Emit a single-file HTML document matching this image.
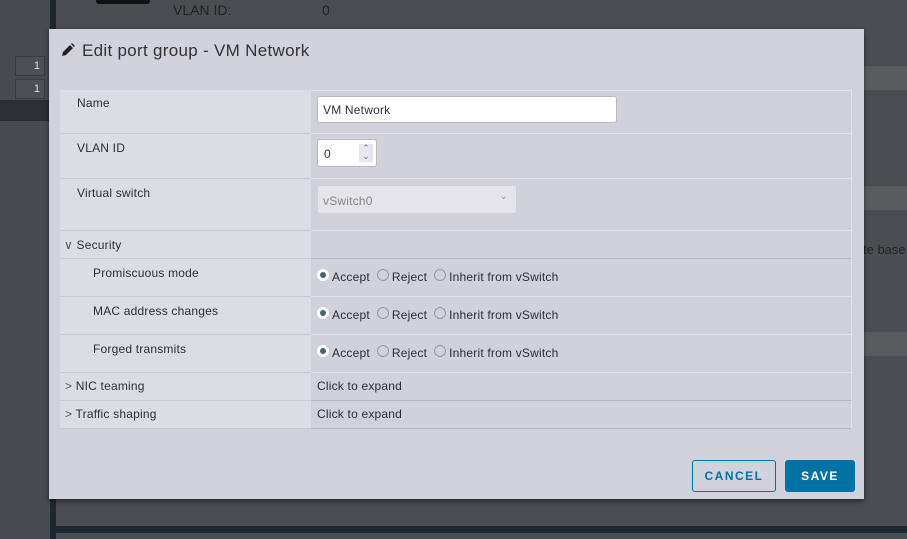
<!DOCTYPE html><html><head><style>
*{margin:0;padding:0;box-sizing:border-box}
body{width:907px;height:539px;overflow:hidden;background:#4c4d52;font-family:"Liberation Sans",sans-serif;position:relative;color:#333}
.a{position:absolute}
.t{font-size:12px;color:#2d2d33;letter-spacing:.2px}
.lab{position:absolute;left:60px;width:251px;background:#dcdce4;border-bottom:1px solid #cacad2}
.val{position:absolute;left:311px;width:541px;background:#d1d1db;border-bottom:1px solid #e2e2ea;border-right:1px solid #e2e2ea}
.r{position:absolute;top:10px;font-size:12px;color:#2d2d33;letter-spacing:.2px;white-space:nowrap}
.rad{display:inline-block;width:12px;height:12px;border-radius:50%;border:1px solid #9a9aa2;background:#d1d1db;vertical-align:0;margin-right:3px}
.on{background:#45607a;border:3px solid #fff}
.g{margin-left:7px}
</style></head><body>
<div class="a" style="left:0;top:0;width:50px;height:539px;background:#4a4b50"></div>
<div class="a" style="left:0;top:100px;width:56px;height:21px;background:#2a2f36"></div>
<div class="a" style="left:15px;top:56px;width:30px;height:20px;border:1px solid #3a3b40;background:#4e4f54;color:#ddd;font-size:11px;text-align:right;padding:3px 4px">1</div>
<div class="a" style="left:15px;top:79px;width:30px;height:20px;border:1px solid #3a3b40;background:#4e4f54;color:#ddd;font-size:11px;text-align:right;padding:3px 4px">1</div>
<div class="a" style="left:50px;top:0;width:6px;height:539px;background:#1e2831"></div>
<div class="a" style="left:50px;top:526px;width:857px;height:7px;background:#1e2831"></div>
<div class="a" style="left:96px;top:0;width:54px;height:4px;background:#111;border-radius:0 0 3px 3px"></div>
<div class="a" style="left:173px;top:2px;color:#222;font-size:14px">VLAN ID:</div>
<div class="a" style="left:322px;top:2px;color:#222;font-size:14px">0</div>
<div class="a" style="left:863px;top:66px;width:44px;height:24px;background:#5a5b5f"></div>
<div class="a" style="left:863px;top:186px;width:44px;height:24px;background:#5a5b5f"></div>
<div class="a" style="left:863px;top:332px;width:44px;height:24px;background:#5a5b5f"></div>
<div class="a" style="left:863px;top:242px;color:#222;font-size:13px">te base</div>

<div class="a" style="left:49px;top:29px;width:815px;height:470px;background:#d2d2dc;box-shadow:0 2px 5px rgba(0,0,0,.5)">
<svg class="a" style="left:12px;top:14px" width="14" height="14" viewBox="0 0 14 14"><path d="M1 13 L2 9 L9 2 L12 5 L5 12 Z" fill="#222"/><path d="M10 1 L11 0 L14 3 L13 4 Z" fill="#222"/></svg>
<div class="a" style="left:33px;top:12px;font-size:17px;color:#333;letter-spacing:.3px">Edit port group - VM Network</div>
</div>

<div class="lab" style="top:90px;height:44px"><span class="a t" style="left:17px;top:6px">Name</span></div>
<div class="val" style="top:90px;height:44px;border-top:1px solid #e2e2ea"><div class="a" style="left:6px;top:5px;width:300px;height:27px;background:#fff;border:1px solid #bbb;border-radius:3px;font-size:12px;padding:6px 5px;letter-spacing:.2px">VM Network</div></div>
<div class="lab" style="top:134px;height:45px"><span class="a t" style="left:17px;top:7px">VLAN ID</span></div>
<div class="val" style="top:134px;height:45px"><div class="a" style="left:6px;top:5px;width:60px;height:28px;background:#fff;border:1px solid #bbb;border-radius:3px;font-size:12px;padding:7px 6px">0<div class="a" style="left:41px;top:4px;width:14px;height:18px;background:#e6e6ec;font-size:9px;line-height:8px;text-align:center;color:#777">&#8963;<br>&#8964;</div></div></div>
<div class="lab" style="top:179px;height:52px"><span class="a t" style="left:17px;top:7px">Virtual switch</span></div>
<div class="val" style="top:179px;height:52px"><div class="a" style="left:6px;top:6px;width:200px;height:29px;background:#e4e4ea;border:1px solid #d0d0d8;border-radius:3px;font-size:12px;color:#888;padding:8px 5px;letter-spacing:.2px">vSwitch0<span class="a" style="right:8px;top:5px;color:#999;font-size:10px">&#8964;</span></div></div>
<div class="lab" style="top:231px;height:28px"><span class="a t" style="left:4px;top:7px"><span style="color:#555">&#8744;</span> Security</span></div>
<div class="val" style="top:231px;height:28px;border-bottom:1px solid #b8b8c0"></div>
<div class="lab" style="top:259px;height:38px"><span class="a t" style="left:33px;top:7px">Promiscuous mode</span></div>
<div class="val" style="top:259px;height:38px"><div class="r" style="left:6px"><span class="rad on"></span>Accept<span class="rad g"></span>Reject<span class="rad g"></span>Inherit from vSwitch</div></div>
<div class="lab" style="top:297px;height:38px"><span class="a t" style="left:33px;top:7px">MAC address changes</span></div>
<div class="val" style="top:297px;height:38px"><div class="r" style="left:6px"><span class="rad on"></span>Accept<span class="rad g"></span>Reject<span class="rad g"></span>Inherit from vSwitch</div></div>
<div class="lab" style="top:335px;height:38px"><span class="a t" style="left:33px;top:7px">Forged transmits</span></div>
<div class="val" style="top:335px;height:38px"><div class="r" style="left:6px"><span class="rad on"></span>Accept<span class="rad g"></span>Reject<span class="rad g"></span>Inherit from vSwitch</div></div>
<div class="lab" style="top:373px;height:28px"><span class="a t" style="left:5px;top:6px"><span style="color:#555">&gt;</span> NIC teaming</span></div>
<div class="val" style="top:373px;height:28px;border-bottom:1px solid #b8b8c0"><span class="a t" style="left:6px;top:6px">Click to expand</span></div>
<div class="lab" style="top:401px;height:28px"><span class="a t" style="left:5px;top:6px"><span style="color:#555">&gt;</span> Traffic shaping</span></div>
<div class="val" style="top:401px;height:28px;border-bottom:1px solid #b8b8c0"><span class="a t" style="left:6px;top:6px">Click to expand</span></div>

<div class="a" style="left:692px;top:460px;width:84px;height:32px;border:1px solid #0072a3;border-radius:3px;color:#0072a3;font-size:12px;font-weight:bold;letter-spacing:1.5px;text-align:center;line-height:30px">CANCEL</div>
<div class="a" style="left:785px;top:460px;width:70px;height:32px;background:#0072a3;border-radius:3px;color:#fff;font-size:12px;font-weight:bold;letter-spacing:1.5px;text-align:center;line-height:32px">SAVE</div>
</body></html>
